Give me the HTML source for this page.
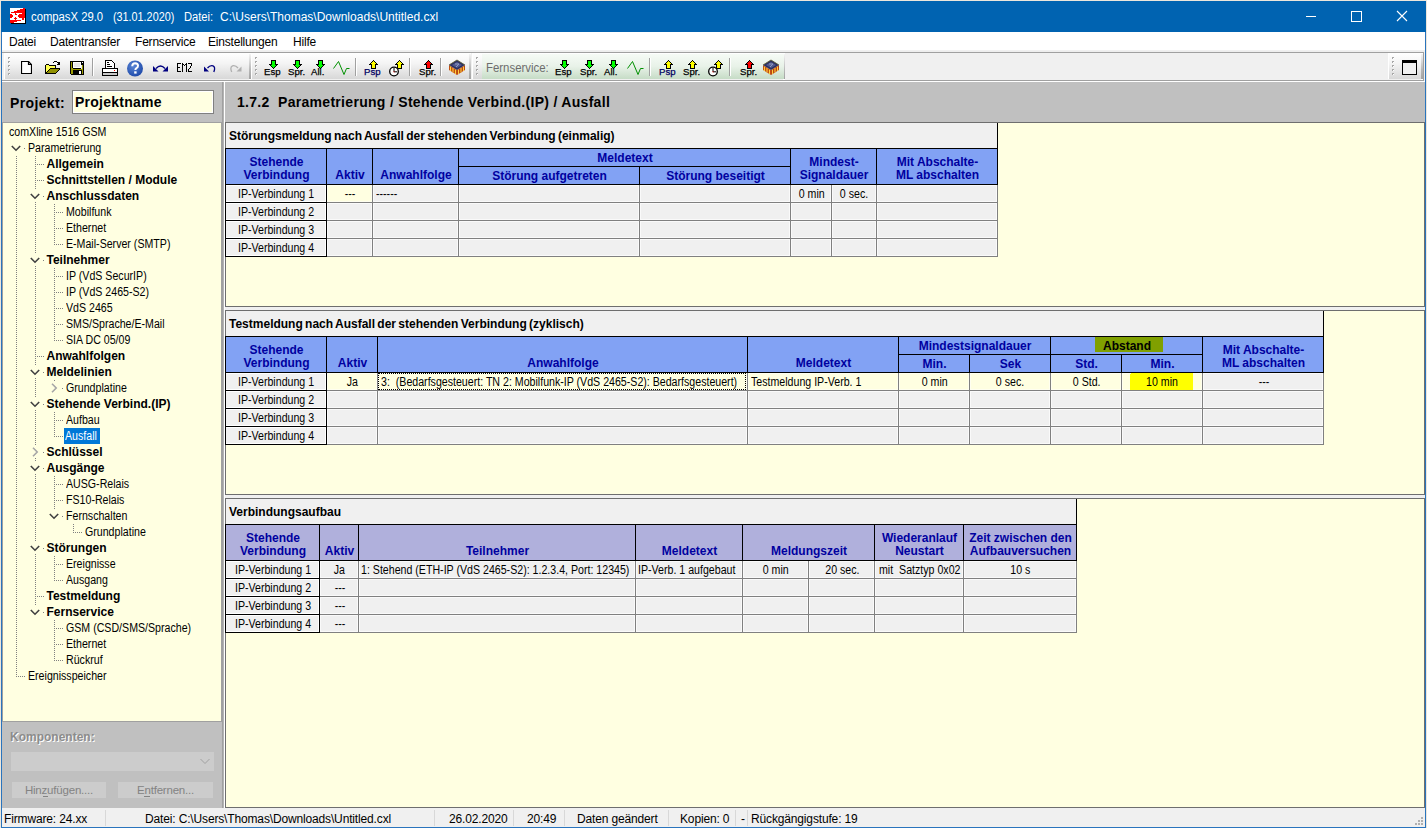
<!DOCTYPE html><html><head><meta charset="utf-8"><style>html,body{margin:0;padding:0;width:1427px;height:828px;overflow:hidden;background:#e9e9e9;}body{position:relative;font-family:"Liberation Sans",sans-serif;}body>div,body>svg{position:absolute;box-sizing:border-box;}.t{white-space:nowrap;}</style></head><body><div style="left:0px;top:0px;width:1427px;height:828px;background:#ece6dc;"></div>
<div style="left:1px;top:1px;width:1425px;height:827px;background:#2a74bd;"></div>
<div style="left:1px;top:1px;width:1425px;height:31px;background:#0063b1;"></div>
<div style="left:2px;top:32px;width:1423px;height:795px;background:#f0f0f0;"></div>
<svg style="left:10px;top:8px" width="16" height="16" viewBox="0 0 16 16" shape-rendering="crispEdges"><rect x="0" y="0" width="15" height="15" fill="#fff"/><path d="M13 0h2v1h-2zM10 1h5v1h-5zM7 2h8v1h-8zM4 3h11v1h-11zM1 4h14v1h-14zM5 5h1v1h-1zM12 5h3v1h-3zM0 6h2v1h-2zM5 6h2v1h-2zM9 6h6v1h-6zM0 7h3v1h-3zM8 7h7v1h-7zM0 8h3v1h-3zM8 8h7v1h-7zM0 9h2v1h-2zM5 9h1v1h-1zM9 9h6v1h-6zM4 10h3v1h-3zM12 10h2v1h-2zM5 11h1v1h-1zM12 11h2v1h-2zM0 12h11v1h-11zM0 13h7v1h-7zM0 14h4v1h-4z" fill="#f00"/><rect x="15" y="1" width="1" height="15" fill="#000"/><rect x="1" y="15" width="15" height="1" fill="#000"/></svg>
<div class="t" style="left:31px;top:11px;font-size:12px;line-height:12px;color:#fff;white-space:pre;"><span style="display:inline-block;transform:scaleX(0.94);transform-origin:0 0">compasX 29.0</span></div>
<div class="t" style="left:113px;top:11px;font-size:12px;line-height:12px;color:#fff;white-space:pre;"><span style="display:inline-block;transform:scaleX(0.9);transform-origin:0 0">(31.01.2020)</span></div>
<div class="t" style="left:184px;top:11px;font-size:12px;line-height:12px;color:#fff;white-space:pre;"><span style="display:inline-block;transform:scaleX(0.93);transform-origin:0 0">Datei:</span></div>
<div class="t" style="left:220px;top:11px;font-size:12px;line-height:12px;color:#fff;white-space:pre;">C:\Users\Thomas\Downloads\Untitled.cxl</div>
<div style="left:1306px;top:16px;width:10px;height:1px;background:#fff;"></div>
<svg style="left:1351px;top:11px" width="11" height="11" viewBox="0 0 11 11" shape-rendering="crispEdges"><rect x="0.5" y="0.5" width="10" height="10" fill="none" stroke="#fff" stroke-width="1"/></svg>
<svg style="left:1396px;top:10px" width="12" height="12" viewBox="0 0 12 12"><path d="M1 1L11 11M11 1L1 11" stroke="#fff" stroke-width="1.1"/></svg>
<div style="left:2px;top:32px;width:1423px;height:18px;background:#ffffff;"></div>
<div class="t" style="left:9px;top:36px;font-size:12px;line-height:12px;color:#000;letter-spacing:-0.2px;">Datei</div>
<div class="t" style="left:50px;top:36px;font-size:12px;line-height:12px;color:#000;letter-spacing:-0.2px;">Datentransfer</div>
<div class="t" style="left:135px;top:36px;font-size:12px;line-height:12px;color:#000;letter-spacing:-0.2px;">Fernservice</div>
<div class="t" style="left:208px;top:36px;font-size:12px;line-height:12px;color:#000;letter-spacing:-0.2px;">Einstellungen</div>
<div class="t" style="left:293px;top:36px;font-size:12px;line-height:12px;color:#000;letter-spacing:-0.2px;">Hilfe</div>
<div style="left:2px;top:50px;width:1422px;height:1px;background:#f0f0f0;"></div>
<div style="left:2px;top:51px;width:1422px;height:1px;background:#eeeeee;"></div>
<div style="left:2px;top:52px;width:1422px;height:1px;background:#a0a0a0;"></div>
<div style="left:2px;top:53px;width:1422px;height:27px;background:#f0f0f0;"></div>
<div style="left:2px;top:80px;width:1422px;height:1px;background:#a0a0a0;"></div>
<div style="left:2px;top:81px;width:1423px;height:1px;background:#ffffff;"></div>
<div style="left:1423px;top:52px;width:1px;height:29px;background:#a0a0a0;"></div>
<div style="left:4px;top:53px;width:247px;height:26px;background:linear-gradient(#ffffff,#f4f4f4 40%,#d8d8d8);"></div>
<div style="left:4px;top:54px;width:1px;height:25px;background:#ffffff;"></div>
<div style="left:249px;top:54px;width:2px;height:26px;background:linear-gradient(#f4f4f4,#b8b8b8 60%,#a0a0a0);"></div>
<div style="left:249px;top:79px;width:2px;height:1px;background:#ffffff;"></div>
<div style="left:8px;top:57px;width:2px;height:2px;background:#a8a8a8;"></div>
<div style="left:9px;top:58px;width:1px;height:1px;background:#ffffff;"></div>
<div style="left:8px;top:61px;width:2px;height:2px;background:#a8a8a8;"></div>
<div style="left:9px;top:62px;width:1px;height:1px;background:#ffffff;"></div>
<div style="left:8px;top:65px;width:2px;height:2px;background:#a8a8a8;"></div>
<div style="left:9px;top:66px;width:1px;height:1px;background:#ffffff;"></div>
<div style="left:8px;top:69px;width:2px;height:2px;background:#a8a8a8;"></div>
<div style="left:9px;top:70px;width:1px;height:1px;background:#ffffff;"></div>
<div style="left:8px;top:73px;width:2px;height:2px;background:#a8a8a8;"></div>
<div style="left:9px;top:74px;width:1px;height:1px;background:#ffffff;"></div>
<div style="left:251px;top:53px;width:220px;height:26px;background:linear-gradient(#ffffff,#f4f4f4 40%,#d8d8d8);"></div>
<div style="left:251px;top:54px;width:1px;height:25px;background:#ffffff;"></div>
<div style="left:469px;top:54px;width:2px;height:26px;background:linear-gradient(#f4f4f4,#b8b8b8 60%,#a0a0a0);"></div>
<div style="left:469px;top:79px;width:2px;height:1px;background:#ffffff;"></div>
<div style="left:255px;top:57px;width:2px;height:2px;background:#a8a8a8;"></div>
<div style="left:256px;top:58px;width:1px;height:1px;background:#ffffff;"></div>
<div style="left:255px;top:61px;width:2px;height:2px;background:#a8a8a8;"></div>
<div style="left:256px;top:62px;width:1px;height:1px;background:#ffffff;"></div>
<div style="left:255px;top:65px;width:2px;height:2px;background:#a8a8a8;"></div>
<div style="left:256px;top:66px;width:1px;height:1px;background:#ffffff;"></div>
<div style="left:255px;top:69px;width:2px;height:2px;background:#a8a8a8;"></div>
<div style="left:256px;top:70px;width:1px;height:1px;background:#ffffff;"></div>
<div style="left:255px;top:73px;width:2px;height:2px;background:#a8a8a8;"></div>
<div style="left:256px;top:74px;width:1px;height:1px;background:#ffffff;"></div>
<div style="left:472px;top:53px;width:313px;height:26px;background:linear-gradient(#ffffff,#f4f4f4 40%,#d8d8d8);"></div>
<div style="left:472px;top:54px;width:1px;height:25px;background:#ffffff;"></div>
<div style="left:783px;top:54px;width:2px;height:26px;background:linear-gradient(#f4f4f4,#b8b8b8 60%,#a0a0a0);"></div>
<div style="left:783px;top:79px;width:2px;height:1px;background:#ffffff;"></div>
<div style="left:482px;top:54px;width:302px;height:25px;background:linear-gradient(#f6fbf6,#e8f2e8 50%,#c6dcc6);"></div>
<div style="left:476px;top:57px;width:2px;height:2px;background:#a8a8a8;"></div>
<div style="left:477px;top:58px;width:1px;height:1px;background:#ffffff;"></div>
<div style="left:476px;top:61px;width:2px;height:2px;background:#a8a8a8;"></div>
<div style="left:477px;top:62px;width:1px;height:1px;background:#ffffff;"></div>
<div style="left:476px;top:65px;width:2px;height:2px;background:#a8a8a8;"></div>
<div style="left:477px;top:66px;width:1px;height:1px;background:#ffffff;"></div>
<div style="left:476px;top:69px;width:2px;height:2px;background:#a8a8a8;"></div>
<div style="left:477px;top:70px;width:1px;height:1px;background:#ffffff;"></div>
<div style="left:476px;top:73px;width:2px;height:2px;background:#a8a8a8;"></div>
<div style="left:477px;top:74px;width:1px;height:1px;background:#ffffff;"></div>
<div style="left:1388px;top:53px;width:35px;height:26px;background:linear-gradient(#ffffff,#f4f4f4 40%,#d8d8d8);"></div>
<div style="left:1388px;top:54px;width:1px;height:25px;background:#ffffff;"></div>
<div style="left:1421px;top:54px;width:2px;height:26px;background:linear-gradient(#f4f4f4,#b8b8b8 60%,#a0a0a0);"></div>
<div style="left:1421px;top:79px;width:2px;height:1px;background:#ffffff;"></div>
<div style="left:1392px;top:57px;width:2px;height:2px;background:#a8a8a8;"></div>
<div style="left:1393px;top:58px;width:1px;height:1px;background:#ffffff;"></div>
<div style="left:1392px;top:61px;width:2px;height:2px;background:#a8a8a8;"></div>
<div style="left:1393px;top:62px;width:1px;height:1px;background:#ffffff;"></div>
<div style="left:1392px;top:65px;width:2px;height:2px;background:#a8a8a8;"></div>
<div style="left:1393px;top:66px;width:1px;height:1px;background:#ffffff;"></div>
<div style="left:1392px;top:69px;width:2px;height:2px;background:#a8a8a8;"></div>
<div style="left:1393px;top:70px;width:1px;height:1px;background:#ffffff;"></div>
<div style="left:1392px;top:73px;width:2px;height:2px;background:#a8a8a8;"></div>
<div style="left:1393px;top:74px;width:1px;height:1px;background:#ffffff;"></div>
<svg style="left:21px;top:61px" width="11" height="13" viewBox="0 0 11 13"><path d="M0.5 0.5H7.5L10.5 3.5V12.5H0.5Z" fill="#fff" stroke="#000" stroke-width="1.2"/><path d="M7.5 0.5V3.5H10.5" fill="none" stroke="#000" stroke-width="1.2"/></svg>
<svg style="left:45px;top:61px" width="15" height="13" viewBox="0 0 15 13" shape-rendering="crispEdges"><path d="M1 4h3v1h-3zM1 5h9v2h-9zM1 7h4v1h-4zM1 8h3v1h-3zM1 9h2v1h-2zM1 10h1v1h-1z" fill="#ffff50"/><path d="M5 8h9v1h-9zM4 9h9v1h-9zM3 10h9v1h-9zM2 11h9v1h-9z" fill="#909000"/><path d="M9 0h3v1h-3zM8 1h1v1h-1zM12 1h1v1h-1zM13 1h2v1h-2zM13 2h2v1h-2zM12 3h3v1h-3zM1 3h3v1h-3zM0 4h1v9h-1zM4 4h7v1h-7zM10 5h1v2h-1zM5 7h10v1h-10zM4 8h1v1h-1zM14 8h1v1h-1zM3 9h1v1h-1zM13 9h1v1h-1zM2 10h1v1h-1zM12 10h1v1h-1zM1 11h1v1h-1zM11 11h1v1h-1zM0 12h11v1h-11z" fill="#000"/></svg>
<svg style="left:70px;top:61px" width="14" height="14" viewBox="0 0 14 14" shape-rendering="crispEdges"><path d="M0 0h14v1h-14zM0 0h1v13h-1zM13 0h1v14h-1zM1 13h13v1h-13zM2 1h1v6h-1zM11 1h1v3h-1zM12 2h1v2h-1zM3 7h8v1h-8zM3 9h9v4h-9zM11 1h1v1h-1z" fill="#000"/><path d="M1 1h1v12h-1zM2 7h1v6h-1zM1 8h12v1h-12zM12 4h1v9h-1z" fill="#9a9a00"/><path d="M3 1h8v6h-8zM9 10h2v3h-2zM12 1h1v1h-1z" fill="#fff"/><path d="M4 2h6v4h-6z" fill="#e8e8e8"/></svg>
<div style="left:92px;top:58px;width:1px;height:18px;background:#a0a0a0;"></div>
<div style="left:93px;top:58px;width:1px;height:18px;background:#ffffff;"></div>
<svg style="left:102px;top:60px" width="17" height="17" viewBox="0 0 17 17" shape-rendering="crispEdges"><path d="M3.5 0.5H9.5L12.5 3.5V8.5H3.5Z" fill="#fff" stroke="#000"/><rect x="5" y="2" width="2" height="1" fill="#000"/><rect x="5" y="4" width="3" height="1" fill="#000"/><rect x="5" y="6" width="5" height="1" fill="#000"/><rect x="0.5" y="8.5" width="15" height="7" rx="1" fill="#fff" stroke="#000"/><rect x="1" y="12" width="15" height="1" fill="#000"/><rect x="1" y="13" width="14" height="2" fill="#c8c8c8"/><rect x="12" y="10" width="1" height="1" fill="#f00"/></svg>
<svg style="left:126px;top:60px" width="18" height="17" viewBox="0 0 18 17"><defs><radialGradient id="hg" cx="0.4" cy="0.35" r="0.7"><stop offset="0" stop-color="#5a86d6"/><stop offset="1" stop-color="#1d48a8"/></radialGradient></defs><circle cx="9" cy="8.5" r="8" fill="url(#hg)"/><path d="M6.2 6.2Q6.4 3.3 9.2 3.3Q12 3.4 12 5.8Q12 7.4 10.2 8.3Q9.4 8.8 9.4 10" fill="none" stroke="#fff" stroke-width="2"/><rect x="8.2" y="11.3" width="2.4" height="2.3" fill="#fff"/></svg>
<svg style="left:152px;top:64px" width="17" height="9" viewBox="0 0 17 9"><path d="M4 4.5Q8.5 -0.5 13 4.5" fill="none" stroke="#000080" stroke-width="1.3"/><path d="M1 2V7.5H6.5Z" fill="#000080"/><path d="M16 2V7.5H10.5Z" fill="#000080"/></svg>
<svg style="left:177px;top:63px" width="15" height="9" viewBox="0 0 15 9" shape-rendering="crispEdges"><path d="M0 0h4v1h-4zM0 0h1v9h-1zM0 4h3v1h-3zM0 8h4v1h-4zM5 0h1v9h-1zM9 0h1v9h-1zM6 1h1v1h-1zM7 2h1v1h-1zM8 1h1v1h-1zM11 0h4v1h-4zM14 0h1v3h-1zM13 3h1v2h-1zM12 5h1v1h-1zM11 6h1v3h-1zM11 8h4v1h-4z" fill="#000"/></svg>
<svg style="left:203px;top:64px" width="14" height="10" viewBox="0 0 14 10"><path d="M4.5 4Q7 1 10 1.8Q12.8 3 10.8 8" fill="none" stroke="#000080" stroke-width="1.3"/><path d="M1 2.5V7.5H6Z" fill="#000080"/></svg>
<svg style="left:229px;top:64px" width="14" height="10" viewBox="0 0 14 10"><path d="M9 4Q6.5 1 3.5 1.8Q0.7 3 2.7 8" fill="none" stroke="#b0b0b0" stroke-width="1.3"/><path d="M12.5 2.5V7.5H7.5Z" fill="#b0b0b0"/></svg>
<svg style="left:269px;top:60px" width="9" height="9" viewBox="0 0 9 9" shape-rendering="crispEdges"><path d="M3 1h3v1h-3zM3 2h3v1h-3zM3 3h3v1h-3zM3 4h3v1h-3zM2 5h5v1h-5zM3 6h3v1h-3zM4 7h1v1h-1z" fill="#00ff00"/><path d="M2 0h5v1h-5zM2 1h1v1h-1zM6 1h1v1h-1zM2 2h1v1h-1zM6 2h1v1h-1zM2 3h1v1h-1zM6 3h1v1h-1zM0 4h3v1h-3zM6 4h3v1h-3zM1 5h1v1h-1zM7 5h1v1h-1zM2 6h1v1h-1zM6 6h1v1h-1zM3 7h1v1h-1zM5 7h1v1h-1zM4 8h1v1h-1z" fill="#000"/></svg>
<div class="t" style="left:264px;top:67px;font-size:9.6px;line-height:9.6px;color:#000;-webkit-text-stroke:0.25px #000;">Esp</div>
<svg style="left:293px;top:60px" width="9" height="9" viewBox="0 0 9 9" shape-rendering="crispEdges"><path d="M3 1h3v1h-3zM3 2h3v1h-3zM3 3h3v1h-3zM3 4h3v1h-3zM2 5h5v1h-5zM3 6h3v1h-3zM4 7h1v1h-1z" fill="#00ff00"/><path d="M2 0h5v1h-5zM2 1h1v1h-1zM6 1h1v1h-1zM2 2h1v1h-1zM6 2h1v1h-1zM2 3h1v1h-1zM6 3h1v1h-1zM0 4h3v1h-3zM6 4h3v1h-3zM1 5h1v1h-1zM7 5h1v1h-1zM2 6h1v1h-1zM6 6h1v1h-1zM3 7h1v1h-1zM5 7h1v1h-1zM4 8h1v1h-1z" fill="#000"/></svg>
<div class="t" style="left:288px;top:67px;font-size:9.6px;line-height:9.6px;color:#000;-webkit-text-stroke:0.25px #000;">Spr.</div>
<svg style="left:316px;top:60px" width="9" height="9" viewBox="0 0 9 9" shape-rendering="crispEdges"><path d="M3 1h3v1h-3zM3 2h3v1h-3zM3 3h3v1h-3zM3 4h3v1h-3zM2 5h5v1h-5zM3 6h3v1h-3zM4 7h1v1h-1z" fill="#00ff00"/><path d="M2 0h5v1h-5zM2 1h1v1h-1zM6 1h1v1h-1zM2 2h1v1h-1zM6 2h1v1h-1zM2 3h1v1h-1zM6 3h1v1h-1zM0 4h3v1h-3zM6 4h3v1h-3zM1 5h1v1h-1zM7 5h1v1h-1zM2 6h1v1h-1zM6 6h1v1h-1zM3 7h1v1h-1zM5 7h1v1h-1zM4 8h1v1h-1z" fill="#000"/></svg>
<div class="t" style="left:311px;top:67px;font-size:9.6px;line-height:9.6px;color:#000;-webkit-text-stroke:0.25px #000;">All.</div>
<svg style="left:333px;top:60px" width="17" height="16" viewBox="0 0 17 16"><path d="M0.5 8.5L5.5 1.5L11 14.5L13.5 8.5H16.5" fill="none" stroke="#009000" stroke-width="1"/></svg>
<div style="left:355px;top:58px;width:1px;height:18px;background:#a0a0a0;"></div>
<div style="left:356px;top:58px;width:1px;height:18px;background:#ffffff;"></div>
<svg style="left:369px;top:60px" width="9" height="9" viewBox="0 0 9 9" shape-rendering="crispEdges"><path d="M4 1h1v1h-1zM3 2h3v1h-3zM2 3h5v1h-5zM3 4h3v1h-3zM3 5h3v1h-3zM3 6h3v1h-3zM3 7h3v1h-3z" fill="#ff0"/><path d="M4 0h1v1h-1zM3 1h1v1h-1zM5 1h1v1h-1zM2 2h1v1h-1zM6 2h1v1h-1zM1 3h1v1h-1zM7 3h1v1h-1zM0 4h3v1h-3zM6 4h3v1h-3zM2 5h1v1h-1zM6 5h1v1h-1zM2 6h1v1h-1zM6 6h1v1h-1zM2 7h1v1h-1zM6 7h1v1h-1zM2 8h5v1h-5z" fill="#000"/></svg>
<div class="t" style="left:364px;top:67px;font-size:9.6px;line-height:9.6px;color:#000060;-webkit-text-stroke:0.25px #000060;">Psp</div>
<svg style="left:395px;top:60px" width="9" height="9" viewBox="0 0 9 9" shape-rendering="crispEdges"><path d="M4 1h1v1h-1zM3 2h3v1h-3zM2 3h5v1h-5zM3 4h3v1h-3zM3 5h3v1h-3zM3 6h3v1h-3zM3 7h3v1h-3z" fill="#ff0"/><path d="M4 0h1v1h-1zM3 1h1v1h-1zM5 1h1v1h-1zM2 2h1v1h-1zM6 2h1v1h-1zM1 3h1v1h-1zM7 3h1v1h-1zM0 4h3v1h-3zM6 4h3v1h-3zM2 5h1v1h-1zM6 5h1v1h-1zM2 6h1v1h-1zM6 6h1v1h-1zM2 7h1v1h-1zM6 7h1v1h-1zM2 8h5v1h-5z" fill="#000"/></svg>
<svg style="left:389px;top:66px" width="11" height="11" viewBox="0 0 11 11"><circle cx="5" cy="5.5" r="4.3" fill="#fff" stroke="#000" stroke-width="1.3"/><path d="M5 2V5.8H8" fill="none" stroke="#000" stroke-width="1"/><rect x="4.5" y="5.3" width="1" height="1" fill="#f00"/></svg>
<div style="left:409px;top:58px;width:1px;height:18px;background:#a0a0a0;"></div>
<div style="left:410px;top:58px;width:1px;height:18px;background:#ffffff;"></div>
<svg style="left:424px;top:60px" width="9" height="9" viewBox="0 0 9 9" shape-rendering="crispEdges"><path d="M4 1h1v1h-1zM3 2h3v1h-3zM2 3h5v1h-5zM3 4h3v1h-3zM3 5h3v1h-3zM3 6h3v1h-3zM3 7h3v1h-3z" fill="#f00"/><path d="M4 0h1v1h-1zM3 1h1v1h-1zM5 1h1v1h-1zM2 2h1v1h-1zM6 2h1v1h-1zM1 3h1v1h-1zM7 3h1v1h-1zM0 4h3v1h-3zM6 4h3v1h-3zM2 5h1v1h-1zM6 5h1v1h-1zM2 6h1v1h-1zM6 6h1v1h-1zM2 7h1v1h-1zM6 7h1v1h-1zM2 8h5v1h-5z" fill="#000"/></svg>
<div class="t" style="left:419px;top:67px;font-size:9.6px;line-height:9.6px;color:#000;-webkit-text-stroke:0.25px #000;">Spr.</div>
<div style="left:440px;top:58px;width:1px;height:18px;background:#a0a0a0;"></div>
<div style="left:441px;top:58px;width:1px;height:18px;background:#ffffff;"></div>
<svg style="left:448px;top:59px" width="18" height="17" viewBox="0 0 18 17"><path d="M1 6L9 11V16L1 11Z" fill="#c04a10"/><path d="M9 11L17 6V11L9 16Z" fill="#b84010"/><path d="M2.5 7.5V12M5 9V13.5M7.5 10.5V15M10.5 10.5V15M13 9V13.5M15.5 7.5V12" stroke="#ffd040" stroke-width="1.1"/><path d="M1 6L9 1L17 6L9 11Z" fill="#2c3060"/><path d="M4 6L9 3L14 6L9 9Z" fill="#505a90"/><path d="M7 5H11L8 8" fill="none" stroke="#9098c0" stroke-width="1"/><path d="M1 6L9 1L17 6" fill="none" stroke="#5a5a30" stroke-width="0.8"/></svg>
<div class="t" style="left:486px;top:62px;font-size:12px;line-height:12px;color:#6d6d6d;"><span style="display:inline-block;transform:scaleX(0.95);transform-origin:0 0">Fernservice:</span></div>
<svg style="left:560px;top:60px" width="9" height="9" viewBox="0 0 9 9" shape-rendering="crispEdges"><path d="M3 1h3v1h-3zM3 2h3v1h-3zM3 3h3v1h-3zM3 4h3v1h-3zM2 5h5v1h-5zM3 6h3v1h-3zM4 7h1v1h-1z" fill="#00ff00"/><path d="M2 0h5v1h-5zM2 1h1v1h-1zM6 1h1v1h-1zM2 2h1v1h-1zM6 2h1v1h-1zM2 3h1v1h-1zM6 3h1v1h-1zM0 4h3v1h-3zM6 4h3v1h-3zM1 5h1v1h-1zM7 5h1v1h-1zM2 6h1v1h-1zM6 6h1v1h-1zM3 7h1v1h-1zM5 7h1v1h-1zM4 8h1v1h-1z" fill="#000"/></svg>
<div class="t" style="left:555px;top:67px;font-size:9.6px;line-height:9.6px;color:#000;-webkit-text-stroke:0.25px #000;">Esp</div>
<svg style="left:585px;top:60px" width="9" height="9" viewBox="0 0 9 9" shape-rendering="crispEdges"><path d="M3 1h3v1h-3zM3 2h3v1h-3zM3 3h3v1h-3zM3 4h3v1h-3zM2 5h5v1h-5zM3 6h3v1h-3zM4 7h1v1h-1z" fill="#00ff00"/><path d="M2 0h5v1h-5zM2 1h1v1h-1zM6 1h1v1h-1zM2 2h1v1h-1zM6 2h1v1h-1zM2 3h1v1h-1zM6 3h1v1h-1zM0 4h3v1h-3zM6 4h3v1h-3zM1 5h1v1h-1zM7 5h1v1h-1zM2 6h1v1h-1zM6 6h1v1h-1zM3 7h1v1h-1zM5 7h1v1h-1zM4 8h1v1h-1z" fill="#000"/></svg>
<div class="t" style="left:580px;top:67px;font-size:9.6px;line-height:9.6px;color:#000;-webkit-text-stroke:0.25px #000;">Spr.</div>
<svg style="left:609px;top:60px" width="9" height="9" viewBox="0 0 9 9" shape-rendering="crispEdges"><path d="M3 1h3v1h-3zM3 2h3v1h-3zM3 3h3v1h-3zM3 4h3v1h-3zM2 5h5v1h-5zM3 6h3v1h-3zM4 7h1v1h-1z" fill="#00ff00"/><path d="M2 0h5v1h-5zM2 1h1v1h-1zM6 1h1v1h-1zM2 2h1v1h-1zM6 2h1v1h-1zM2 3h1v1h-1zM6 3h1v1h-1zM0 4h3v1h-3zM6 4h3v1h-3zM1 5h1v1h-1zM7 5h1v1h-1zM2 6h1v1h-1zM6 6h1v1h-1zM3 7h1v1h-1zM5 7h1v1h-1zM4 8h1v1h-1z" fill="#000"/></svg>
<div class="t" style="left:604px;top:67px;font-size:9.6px;line-height:9.6px;color:#000;-webkit-text-stroke:0.25px #000;">All.</div>
<svg style="left:627px;top:60px" width="17" height="16" viewBox="0 0 17 16"><path d="M0.5 8.5L5.5 1.5L11 14.5L13.5 8.5H16.5" fill="none" stroke="#009000" stroke-width="1"/></svg>
<div style="left:649px;top:58px;width:1px;height:18px;background:#a0a0a0;"></div>
<div style="left:650px;top:58px;width:1px;height:18px;background:#ffffff;"></div>
<svg style="left:664px;top:60px" width="9" height="9" viewBox="0 0 9 9" shape-rendering="crispEdges"><path d="M4 1h1v1h-1zM3 2h3v1h-3zM2 3h5v1h-5zM3 4h3v1h-3zM3 5h3v1h-3zM3 6h3v1h-3zM3 7h3v1h-3z" fill="#ff0"/><path d="M4 0h1v1h-1zM3 1h1v1h-1zM5 1h1v1h-1zM2 2h1v1h-1zM6 2h1v1h-1zM1 3h1v1h-1zM7 3h1v1h-1zM0 4h3v1h-3zM6 4h3v1h-3zM2 5h1v1h-1zM6 5h1v1h-1zM2 6h1v1h-1zM6 6h1v1h-1zM2 7h1v1h-1zM6 7h1v1h-1zM2 8h5v1h-5z" fill="#000"/></svg>
<div class="t" style="left:659px;top:67px;font-size:9.6px;line-height:9.6px;color:#000060;-webkit-text-stroke:0.25px #000060;">Psp</div>
<svg style="left:688px;top:60px" width="9" height="9" viewBox="0 0 9 9" shape-rendering="crispEdges"><path d="M4 1h1v1h-1zM3 2h3v1h-3zM2 3h5v1h-5zM3 4h3v1h-3zM3 5h3v1h-3zM3 6h3v1h-3zM3 7h3v1h-3z" fill="#ff0"/><path d="M4 0h1v1h-1zM3 1h1v1h-1zM5 1h1v1h-1zM2 2h1v1h-1zM6 2h1v1h-1zM1 3h1v1h-1zM7 3h1v1h-1zM0 4h3v1h-3zM6 4h3v1h-3zM2 5h1v1h-1zM6 5h1v1h-1zM2 6h1v1h-1zM6 6h1v1h-1zM2 7h1v1h-1zM6 7h1v1h-1zM2 8h5v1h-5z" fill="#000"/></svg>
<div class="t" style="left:683px;top:67px;font-size:9.6px;line-height:9.6px;color:#000;-webkit-text-stroke:0.25px #000;">Spr.</div>
<svg style="left:714px;top:60px" width="9" height="9" viewBox="0 0 9 9" shape-rendering="crispEdges"><path d="M4 1h1v1h-1zM3 2h3v1h-3zM2 3h5v1h-5zM3 4h3v1h-3zM3 5h3v1h-3zM3 6h3v1h-3zM3 7h3v1h-3z" fill="#ff0"/><path d="M4 0h1v1h-1zM3 1h1v1h-1zM5 1h1v1h-1zM2 2h1v1h-1zM6 2h1v1h-1zM1 3h1v1h-1zM7 3h1v1h-1zM0 4h3v1h-3zM6 4h3v1h-3zM2 5h1v1h-1zM6 5h1v1h-1zM2 6h1v1h-1zM6 6h1v1h-1zM2 7h1v1h-1zM6 7h1v1h-1zM2 8h5v1h-5z" fill="#000"/></svg>
<svg style="left:708px;top:66px" width="11" height="11" viewBox="0 0 11 11"><circle cx="5" cy="5.5" r="4.3" fill="#fff" stroke="#000" stroke-width="1.3"/><path d="M5 2V5.8H8" fill="none" stroke="#000" stroke-width="1"/><rect x="4.5" y="5.3" width="1" height="1" fill="#f00"/></svg>
<div style="left:729px;top:58px;width:1px;height:18px;background:#a0a0a0;"></div>
<div style="left:730px;top:58px;width:1px;height:18px;background:#ffffff;"></div>
<svg style="left:745px;top:60px" width="9" height="9" viewBox="0 0 9 9" shape-rendering="crispEdges"><path d="M4 1h1v1h-1zM3 2h3v1h-3zM2 3h5v1h-5zM3 4h3v1h-3zM3 5h3v1h-3zM3 6h3v1h-3zM3 7h3v1h-3z" fill="#f00"/><path d="M4 0h1v1h-1zM3 1h1v1h-1zM5 1h1v1h-1zM2 2h1v1h-1zM6 2h1v1h-1zM1 3h1v1h-1zM7 3h1v1h-1zM0 4h3v1h-3zM6 4h3v1h-3zM2 5h1v1h-1zM6 5h1v1h-1zM2 6h1v1h-1zM6 6h1v1h-1zM2 7h1v1h-1zM6 7h1v1h-1zM2 8h5v1h-5z" fill="#000"/></svg>
<div class="t" style="left:740px;top:67px;font-size:9.6px;line-height:9.6px;color:#000;-webkit-text-stroke:0.25px #000;">Spr.</div>
<svg style="left:762px;top:59px" width="18" height="17" viewBox="0 0 18 17"><path d="M1 6L9 11V16L1 11Z" fill="#c04a10"/><path d="M9 11L17 6V11L9 16Z" fill="#b84010"/><path d="M2.5 7.5V12M5 9V13.5M7.5 10.5V15M10.5 10.5V15M13 9V13.5M15.5 7.5V12" stroke="#ffd040" stroke-width="1.1"/><path d="M1 6L9 1L17 6L9 11Z" fill="#2c3060"/><path d="M4 6L9 3L14 6L9 9Z" fill="#505a90"/><path d="M7 5H11L8 8" fill="none" stroke="#9098c0" stroke-width="1"/><path d="M1 6L9 1L17 6" fill="none" stroke="#5a5a30" stroke-width="0.8"/></svg>
<svg style="left:1402px;top:60px" width="15" height="15" viewBox="0 0 15 15" shape-rendering="crispEdges"><rect x="0" y="0" width="15" height="15" fill="#000"/><rect x="1" y="3" width="13" height="11" fill="#f0f0f0"/></svg>
<div style="left:2px;top:82px;width:1423px;height:726px;background:#c0c0c0;"></div>
<div class="t" style="left:10px;top:96px;font-size:14px;line-height:14px;color:#000;font-weight:bold;letter-spacing:0.35px;">Projekt:</div>
<div style="left:72px;top:90px;width:142px;height:24px;background:#808080;"></div>
<div style="left:73px;top:91px;width:140px;height:22px;background:#ffffff;"></div>
<div style="left:74px;top:92px;width:138px;height:20px;background:#ffffe1;"></div>
<div class="t" style="left:75px;top:95px;font-size:14px;line-height:14px;color:#000;font-weight:bold;letter-spacing:0.25px;">Projektname</div>
<div style="left:2px;top:122px;width:220px;height:600px;background:#a0a0a0;"></div>
<div style="left:3px;top:123px;width:218px;height:598px;background:#ffffe1;"></div>
<div class="t" style="left:9px;top:126px;font-size:12px;line-height:12px;color:#000;"><span style="display:inline-block;transform:scaleX(0.885);transform-origin:0 0">comXline 1516 GSM</span></div>
<div style="left:24px;top:148px;width:1px;height:1px;background:#808080;"></div>
<div style="left:11px;top:142px;width:11px;height:12px;background:#ffffe1;z-index:2"></div>
<svg style="left:11px;top:145px;z-index:3" width="10" height="7" viewBox="0 0 10 7"><path d="M0.8 1L5 5.2L9.2 1" fill="none" stroke="#404040" stroke-width="1.6"/></svg>
<div class="t" style="left:27.5px;top:142px;font-size:12px;line-height:12px;color:#000;"><span style="display:inline-block;transform:scaleX(0.885);transform-origin:0 0">Parametrierung</span></div>
<div style="left:37px;top:164px;width:8px;height:1px;background:repeating-linear-gradient(90deg,#808080 0 1px, transparent 1px 2px);"></div>
<div class="t" style="left:46.5px;top:158px;font-size:12px;line-height:12px;color:#000;font-weight:bold;">Allgemein</div>
<div style="left:37px;top:180px;width:8px;height:1px;background:repeating-linear-gradient(90deg,#808080 0 1px, transparent 1px 2px);"></div>
<div class="t" style="left:46.5px;top:174px;font-size:12px;line-height:12px;color:#000;font-weight:bold;">Schnittstellen / Module</div>
<div style="left:43px;top:196px;width:1px;height:1px;background:#808080;"></div>
<div style="left:30px;top:190px;width:11px;height:12px;background:#ffffe1;z-index:2"></div>
<svg style="left:30px;top:193px;z-index:3" width="10" height="7" viewBox="0 0 10 7"><path d="M0.8 1L5 5.2L9.2 1" fill="none" stroke="#404040" stroke-width="1.6"/></svg>
<div class="t" style="left:46.5px;top:190px;font-size:12px;line-height:12px;color:#000;font-weight:bold;">Anschlussdaten</div>
<div style="left:56px;top:212px;width:8px;height:1px;background:repeating-linear-gradient(90deg,#808080 0 1px, transparent 1px 2px);"></div>
<div class="t" style="left:65.5px;top:206px;font-size:12px;line-height:12px;color:#000;"><span style="display:inline-block;transform:scaleX(0.885);transform-origin:0 0">Mobilfunk</span></div>
<div style="left:56px;top:228px;width:8px;height:1px;background:repeating-linear-gradient(90deg,#808080 0 1px, transparent 1px 2px);"></div>
<div class="t" style="left:65.5px;top:222px;font-size:12px;line-height:12px;color:#000;"><span style="display:inline-block;transform:scaleX(0.885);transform-origin:0 0">Ethernet</span></div>
<div style="left:56px;top:244px;width:8px;height:1px;background:repeating-linear-gradient(90deg,#808080 0 1px, transparent 1px 2px);"></div>
<div class="t" style="left:65.5px;top:238px;font-size:12px;line-height:12px;color:#000;"><span style="display:inline-block;transform:scaleX(0.885);transform-origin:0 0">E-Mail-Server (SMTP)</span></div>
<div style="left:43px;top:260px;width:1px;height:1px;background:#808080;"></div>
<div style="left:30px;top:254px;width:11px;height:12px;background:#ffffe1;z-index:2"></div>
<svg style="left:30px;top:257px;z-index:3" width="10" height="7" viewBox="0 0 10 7"><path d="M0.8 1L5 5.2L9.2 1" fill="none" stroke="#404040" stroke-width="1.6"/></svg>
<div class="t" style="left:46.5px;top:254px;font-size:12px;line-height:12px;color:#000;font-weight:bold;">Teilnehmer</div>
<div style="left:56px;top:276px;width:8px;height:1px;background:repeating-linear-gradient(90deg,#808080 0 1px, transparent 1px 2px);"></div>
<div class="t" style="left:65.5px;top:270px;font-size:12px;line-height:12px;color:#000;"><span style="display:inline-block;transform:scaleX(0.885);transform-origin:0 0">IP (VdS SecurIP)</span></div>
<div style="left:56px;top:292px;width:8px;height:1px;background:repeating-linear-gradient(90deg,#808080 0 1px, transparent 1px 2px);"></div>
<div class="t" style="left:65.5px;top:286px;font-size:12px;line-height:12px;color:#000;"><span style="display:inline-block;transform:scaleX(0.885);transform-origin:0 0">IP (VdS 2465-S2)</span></div>
<div style="left:56px;top:308px;width:8px;height:1px;background:repeating-linear-gradient(90deg,#808080 0 1px, transparent 1px 2px);"></div>
<div class="t" style="left:65.5px;top:302px;font-size:12px;line-height:12px;color:#000;"><span style="display:inline-block;transform:scaleX(0.885);transform-origin:0 0">VdS 2465</span></div>
<div style="left:56px;top:324px;width:8px;height:1px;background:repeating-linear-gradient(90deg,#808080 0 1px, transparent 1px 2px);"></div>
<div class="t" style="left:65.5px;top:318px;font-size:12px;line-height:12px;color:#000;"><span style="display:inline-block;transform:scaleX(0.885);transform-origin:0 0">SMS/Sprache/E-Mail</span></div>
<div style="left:56px;top:340px;width:8px;height:1px;background:repeating-linear-gradient(90deg,#808080 0 1px, transparent 1px 2px);"></div>
<div class="t" style="left:65.5px;top:334px;font-size:12px;line-height:12px;color:#000;"><span style="display:inline-block;transform:scaleX(0.885);transform-origin:0 0">SIA DC 05/09</span></div>
<div style="left:37px;top:356px;width:8px;height:1px;background:repeating-linear-gradient(90deg,#808080 0 1px, transparent 1px 2px);"></div>
<div class="t" style="left:46.5px;top:350px;font-size:12px;line-height:12px;color:#000;font-weight:bold;">Anwahlfolgen</div>
<div style="left:43px;top:372px;width:1px;height:1px;background:#808080;"></div>
<div style="left:30px;top:366px;width:11px;height:12px;background:#ffffe1;z-index:2"></div>
<svg style="left:30px;top:369px;z-index:3" width="10" height="7" viewBox="0 0 10 7"><path d="M0.8 1L5 5.2L9.2 1" fill="none" stroke="#404040" stroke-width="1.6"/></svg>
<div class="t" style="left:46.5px;top:366px;font-size:12px;line-height:12px;color:#000;font-weight:bold;">Meldelinien</div>
<div style="left:62px;top:388px;width:1px;height:1px;background:#808080;"></div>
<div style="left:49px;top:382px;width:11px;height:12px;background:#ffffe1;z-index:2"></div>
<svg style="left:51px;top:383px;z-index:3" width="7" height="10" viewBox="0 0 7 10"><path d="M1 0.8L5.2 5L1 9.2" fill="none" stroke="#a6a6a6" stroke-width="1.6"/></svg>
<div class="t" style="left:65.5px;top:382px;font-size:12px;line-height:12px;color:#000;"><span style="display:inline-block;transform:scaleX(0.885);transform-origin:0 0">Grundplatine</span></div>
<div style="left:43px;top:404px;width:1px;height:1px;background:#808080;"></div>
<div style="left:30px;top:398px;width:11px;height:12px;background:#ffffe1;z-index:2"></div>
<svg style="left:30px;top:401px;z-index:3" width="10" height="7" viewBox="0 0 10 7"><path d="M0.8 1L5 5.2L9.2 1" fill="none" stroke="#404040" stroke-width="1.6"/></svg>
<div class="t" style="left:46.5px;top:398px;font-size:12px;line-height:12px;color:#000;font-weight:bold;">Stehende Verbind.(IP)</div>
<div style="left:56px;top:420px;width:8px;height:1px;background:repeating-linear-gradient(90deg,#808080 0 1px, transparent 1px 2px);"></div>
<div class="t" style="left:65.5px;top:414px;font-size:12px;line-height:12px;color:#000;"><span style="display:inline-block;transform:scaleX(0.885);transform-origin:0 0">Aufbau</span></div>
<div style="left:56px;top:436px;width:8px;height:1px;background:repeating-linear-gradient(90deg,#808080 0 1px, transparent 1px 2px);"></div>
<div style="left:64px;top:428px;width:36px;height:16px;background:#0078d7;"></div>
<div class="t" style="left:65px;top:430px;font-size:12px;line-height:12px;color:#fff;"><span style="display:inline-block;transform:scaleX(0.885);transform-origin:0 0">Ausfall</span></div>
<div style="left:43px;top:452px;width:1px;height:1px;background:#808080;"></div>
<div style="left:30px;top:446px;width:11px;height:12px;background:#ffffe1;z-index:2"></div>
<svg style="left:32px;top:447px;z-index:3" width="7" height="10" viewBox="0 0 7 10"><path d="M1 0.8L5.2 5L1 9.2" fill="none" stroke="#a6a6a6" stroke-width="1.6"/></svg>
<div class="t" style="left:46.5px;top:446px;font-size:12px;line-height:12px;color:#000;font-weight:bold;">Schlüssel</div>
<div style="left:43px;top:468px;width:1px;height:1px;background:#808080;"></div>
<div style="left:30px;top:462px;width:11px;height:12px;background:#ffffe1;z-index:2"></div>
<svg style="left:30px;top:465px;z-index:3" width="10" height="7" viewBox="0 0 10 7"><path d="M0.8 1L5 5.2L9.2 1" fill="none" stroke="#404040" stroke-width="1.6"/></svg>
<div class="t" style="left:46.5px;top:462px;font-size:12px;line-height:12px;color:#000;font-weight:bold;">Ausgänge</div>
<div style="left:56px;top:484px;width:8px;height:1px;background:repeating-linear-gradient(90deg,#808080 0 1px, transparent 1px 2px);"></div>
<div class="t" style="left:65.5px;top:478px;font-size:12px;line-height:12px;color:#000;"><span style="display:inline-block;transform:scaleX(0.885);transform-origin:0 0">AUSG-Relais</span></div>
<div style="left:56px;top:500px;width:8px;height:1px;background:repeating-linear-gradient(90deg,#808080 0 1px, transparent 1px 2px);"></div>
<div class="t" style="left:65.5px;top:494px;font-size:12px;line-height:12px;color:#000;"><span style="display:inline-block;transform:scaleX(0.885);transform-origin:0 0">FS10-Relais</span></div>
<div style="left:62px;top:516px;width:1px;height:1px;background:#808080;"></div>
<div style="left:49px;top:510px;width:11px;height:12px;background:#ffffe1;z-index:2"></div>
<svg style="left:49px;top:513px;z-index:3" width="10" height="7" viewBox="0 0 10 7"><path d="M0.8 1L5 5.2L9.2 1" fill="none" stroke="#404040" stroke-width="1.6"/></svg>
<div class="t" style="left:65.5px;top:510px;font-size:12px;line-height:12px;color:#000;"><span style="display:inline-block;transform:scaleX(0.885);transform-origin:0 0">Fernschalten</span></div>
<div style="left:75px;top:532px;width:8px;height:1px;background:repeating-linear-gradient(90deg,#808080 0 1px, transparent 1px 2px);"></div>
<div class="t" style="left:84.5px;top:526px;font-size:12px;line-height:12px;color:#000;"><span style="display:inline-block;transform:scaleX(0.885);transform-origin:0 0">Grundplatine</span></div>
<div style="left:43px;top:548px;width:1px;height:1px;background:#808080;"></div>
<div style="left:30px;top:542px;width:11px;height:12px;background:#ffffe1;z-index:2"></div>
<svg style="left:30px;top:545px;z-index:3" width="10" height="7" viewBox="0 0 10 7"><path d="M0.8 1L5 5.2L9.2 1" fill="none" stroke="#404040" stroke-width="1.6"/></svg>
<div class="t" style="left:46.5px;top:542px;font-size:12px;line-height:12px;color:#000;font-weight:bold;">Störungen</div>
<div style="left:56px;top:564px;width:8px;height:1px;background:repeating-linear-gradient(90deg,#808080 0 1px, transparent 1px 2px);"></div>
<div class="t" style="left:65.5px;top:558px;font-size:12px;line-height:12px;color:#000;"><span style="display:inline-block;transform:scaleX(0.885);transform-origin:0 0">Ereignisse</span></div>
<div style="left:56px;top:580px;width:8px;height:1px;background:repeating-linear-gradient(90deg,#808080 0 1px, transparent 1px 2px);"></div>
<div class="t" style="left:65.5px;top:574px;font-size:12px;line-height:12px;color:#000;"><span style="display:inline-block;transform:scaleX(0.885);transform-origin:0 0">Ausgang</span></div>
<div style="left:37px;top:596px;width:8px;height:1px;background:repeating-linear-gradient(90deg,#808080 0 1px, transparent 1px 2px);"></div>
<div class="t" style="left:46.5px;top:590px;font-size:12px;line-height:12px;color:#000;font-weight:bold;">Testmeldung</div>
<div style="left:43px;top:612px;width:1px;height:1px;background:#808080;"></div>
<div style="left:30px;top:606px;width:11px;height:12px;background:#ffffe1;z-index:2"></div>
<svg style="left:30px;top:609px;z-index:3" width="10" height="7" viewBox="0 0 10 7"><path d="M0.8 1L5 5.2L9.2 1" fill="none" stroke="#404040" stroke-width="1.6"/></svg>
<div class="t" style="left:46.5px;top:606px;font-size:12px;line-height:12px;color:#000;font-weight:bold;">Fernservice</div>
<div style="left:56px;top:628px;width:8px;height:1px;background:repeating-linear-gradient(90deg,#808080 0 1px, transparent 1px 2px);"></div>
<div class="t" style="left:65.5px;top:622px;font-size:12px;line-height:12px;color:#000;"><span style="display:inline-block;transform:scaleX(0.885);transform-origin:0 0">GSM (CSD/SMS/Sprache)</span></div>
<div style="left:56px;top:644px;width:8px;height:1px;background:repeating-linear-gradient(90deg,#808080 0 1px, transparent 1px 2px);"></div>
<div class="t" style="left:65.5px;top:638px;font-size:12px;line-height:12px;color:#000;"><span style="display:inline-block;transform:scaleX(0.885);transform-origin:0 0">Ethernet</span></div>
<div style="left:56px;top:660px;width:8px;height:1px;background:repeating-linear-gradient(90deg,#808080 0 1px, transparent 1px 2px);"></div>
<div class="t" style="left:65.5px;top:654px;font-size:12px;line-height:12px;color:#000;"><span style="display:inline-block;transform:scaleX(0.885);transform-origin:0 0">Rückruf</span></div>
<div style="left:18px;top:676px;width:8px;height:1px;background:repeating-linear-gradient(90deg,#808080 0 1px, transparent 1px 2px);"></div>
<div class="t" style="left:27.5px;top:670px;font-size:12px;line-height:12px;color:#000;"><span style="display:inline-block;transform:scaleX(0.885);transform-origin:0 0">Ereignisspeicher</span></div>
<div style="left:16px;top:156px;width:1px;height:521px;background:repeating-linear-gradient(#808080 0 1px, transparent 1px 2px);"></div>
<div style="left:35px;top:156px;width:1px;height:457px;background:repeating-linear-gradient(#808080 0 1px, transparent 1px 2px);"></div>
<div style="left:54px;top:204px;width:1px;height:41px;background:repeating-linear-gradient(#808080 0 1px, transparent 1px 2px);"></div>
<div style="left:54px;top:268px;width:1px;height:73px;background:repeating-linear-gradient(#808080 0 1px, transparent 1px 2px);"></div>
<div style="left:54px;top:380px;width:1px;height:9px;background:repeating-linear-gradient(#808080 0 1px, transparent 1px 2px);"></div>
<div style="left:54px;top:412px;width:1px;height:25px;background:repeating-linear-gradient(#808080 0 1px, transparent 1px 2px);"></div>
<div style="left:54px;top:476px;width:1px;height:41px;background:repeating-linear-gradient(#808080 0 1px, transparent 1px 2px);"></div>
<div style="left:73px;top:524px;width:1px;height:9px;background:repeating-linear-gradient(#808080 0 1px, transparent 1px 2px);"></div>
<div style="left:54px;top:556px;width:1px;height:25px;background:repeating-linear-gradient(#808080 0 1px, transparent 1px 2px);"></div>
<div style="left:54px;top:620px;width:1px;height:41px;background:repeating-linear-gradient(#808080 0 1px, transparent 1px 2px);"></div>
<div class="t" style="left:10px;top:731px;font-size:12px;line-height:12px;color:#8c8c8c;font-weight:bold;text-shadow:1px 1px 0 #fff;">Komponenten:</div>
<div style="left:11px;top:752px;width:203px;height:19px;background:#cccccc;"></div>
<svg style="left:200px;top:758px" width="10" height="7" viewBox="0 0 10 7"><path d="M0.5 1L5 5.5L9.5 1" fill="none" stroke="#a0a0a0" stroke-width="1"/></svg>
<div style="left:12px;top:782px;width:94px;height:16px;background:#cccccc;"></div>
<div style="left:118px;top:782px;width:95px;height:16px;background:#cccccc;"></div>
<div class="t" style="left:12px;top:785px;font-size:11.5px;line-height:11.5px;color:#838383;letter-spacing:-0.2px;width:94px;text-align:center;">Hinzufügen....</div>
<div class="t" style="left:118px;top:785px;font-size:11.5px;line-height:11.5px;color:#838383;letter-spacing:-0.2px;width:95px;text-align:center;">Entfernen...</div>
<div style="left:43px;top:796px;width:5px;height:1px;background:#838383;"></div>
<div style="left:144px;top:796px;width:6px;height:1px;background:#838383;"></div>
<div style="left:222px;top:82px;width:1px;height:726px;background:#a0a0a0;"></div>
<div style="left:223px;top:82px;width:1px;height:726px;background:#b4b4b4;"></div>
<div style="left:224px;top:82px;width:1px;height:726px;background:#ffffff;"></div>
<div class="t" style="left:237px;top:95px;font-size:14px;line-height:14px;color:#000;font-weight:bold;letter-spacing:0.3px;white-space:pre;">1.7.2  Parametrierung / Stehende Verbind.(IP) / Ausfall</div>
<div style="left:225px;top:122px;width:1200px;height:686px;background:#ffffe1;"></div>
<div style="left:225px;top:122px;width:1200px;height:185px;background:#6e6e6e;"></div>
<div style="left:226px;top:123px;width:1198px;height:183px;background:#ffffe1;"></div>
<div style="left:225px;top:307px;width:1200px;height:3px;background:#f0f0f0;"></div>
<div style="left:225px;top:310px;width:1200px;height:185px;background:#6e6e6e;"></div>
<div style="left:226px;top:311px;width:1198px;height:183px;background:#ffffe1;"></div>
<div style="left:225px;top:495px;width:1200px;height:3px;background:#f0f0f0;"></div>
<div style="left:225px;top:498px;width:1200px;height:310px;background:#6e6e6e;"></div>
<div style="left:226px;top:499px;width:1198px;height:308px;background:#ffffe1;"></div>
<div style="left:226px;top:123px;width:771px;height:25px;background:#f0f0f0;"></div>
<div style="left:997px;top:123px;width:1px;height:26px;background:#000;"></div>
<div class="t" style="left:229px;top:130px;font-size:12px;line-height:12px;color:#000;font-weight:bold;word-spacing:-1px;">Störungsmeldung nach Ausfall der stehenden Verbindung (einmalig)</div>
<div style="left:225px;top:148px;width:773px;height:37px;background:#000;"></div>
<div style="left:226px;top:149px;width:771px;height:35px;background:#82a2f4;"></div>
<div style="left:225px;top:148px;width:1px;height:37px;background:#000;"></div>
<div style="left:326px;top:148px;width:1px;height:37px;background:#000;"></div>
<div style="left:372px;top:148px;width:1px;height:37px;background:#000;"></div>
<div style="left:458px;top:148px;width:1px;height:37px;background:#000;"></div>
<div style="left:790px;top:148px;width:1px;height:37px;background:#000;"></div>
<div style="left:876px;top:148px;width:1px;height:37px;background:#000;"></div>
<div style="left:997px;top:148px;width:1px;height:37px;background:#000;"></div>
<div style="left:639px;top:166px;width:1px;height:19px;background:#000;"></div>
<div style="left:458px;top:166px;width:333px;height:1px;background:#000;"></div>
<div style="left:225px;top:184px;width:773px;height:73px;background:#808080;"></div>
<div style="left:226px;top:185px;width:100px;height:17px;background:#ffffff;"></div>
<div style="left:226px;top:186px;width:99px;height:15px;background:#f0f0f0;"></div>
<div style="left:327px;top:185px;width:45px;height:17px;background:#fffff0;"></div>
<div style="left:328px;top:186px;width:43px;height:15px;background:#ffffe1;"></div>
<div style="left:373px;top:185px;width:85px;height:17px;background:#fafafa;"></div>
<div style="left:374px;top:186px;width:83px;height:15px;background:#f0f0f0;"></div>
<div style="left:459px;top:185px;width:180px;height:17px;background:#fafafa;"></div>
<div style="left:460px;top:186px;width:178px;height:15px;background:#f0f0f0;"></div>
<div style="left:640px;top:185px;width:150px;height:17px;background:#fafafa;"></div>
<div style="left:641px;top:186px;width:148px;height:15px;background:#f0f0f0;"></div>
<div style="left:791px;top:185px;width:40px;height:17px;background:#fafafa;"></div>
<div style="left:792px;top:186px;width:38px;height:15px;background:#f0f0f0;"></div>
<div style="left:832px;top:185px;width:44px;height:17px;background:#fafafa;"></div>
<div style="left:833px;top:186px;width:42px;height:15px;background:#f0f0f0;"></div>
<div style="left:877px;top:185px;width:120px;height:17px;background:#fafafa;"></div>
<div style="left:878px;top:186px;width:118px;height:15px;background:#f0f0f0;"></div>
<div style="left:226px;top:203px;width:100px;height:17px;background:#ffffff;"></div>
<div style="left:226px;top:204px;width:99px;height:15px;background:#f0f0f0;"></div>
<div style="left:327px;top:203px;width:45px;height:17px;background:#fafafa;"></div>
<div style="left:328px;top:204px;width:43px;height:15px;background:#f0f0f0;"></div>
<div style="left:373px;top:203px;width:85px;height:17px;background:#fafafa;"></div>
<div style="left:374px;top:204px;width:83px;height:15px;background:#f0f0f0;"></div>
<div style="left:459px;top:203px;width:180px;height:17px;background:#fafafa;"></div>
<div style="left:460px;top:204px;width:178px;height:15px;background:#f0f0f0;"></div>
<div style="left:640px;top:203px;width:150px;height:17px;background:#fafafa;"></div>
<div style="left:641px;top:204px;width:148px;height:15px;background:#f0f0f0;"></div>
<div style="left:791px;top:203px;width:40px;height:17px;background:#fafafa;"></div>
<div style="left:792px;top:204px;width:38px;height:15px;background:#f0f0f0;"></div>
<div style="left:832px;top:203px;width:44px;height:17px;background:#fafafa;"></div>
<div style="left:833px;top:204px;width:42px;height:15px;background:#f0f0f0;"></div>
<div style="left:877px;top:203px;width:120px;height:17px;background:#fafafa;"></div>
<div style="left:878px;top:204px;width:118px;height:15px;background:#f0f0f0;"></div>
<div style="left:226px;top:221px;width:100px;height:17px;background:#ffffff;"></div>
<div style="left:226px;top:222px;width:99px;height:15px;background:#f0f0f0;"></div>
<div style="left:327px;top:221px;width:45px;height:17px;background:#fafafa;"></div>
<div style="left:328px;top:222px;width:43px;height:15px;background:#f0f0f0;"></div>
<div style="left:373px;top:221px;width:85px;height:17px;background:#fafafa;"></div>
<div style="left:374px;top:222px;width:83px;height:15px;background:#f0f0f0;"></div>
<div style="left:459px;top:221px;width:180px;height:17px;background:#fafafa;"></div>
<div style="left:460px;top:222px;width:178px;height:15px;background:#f0f0f0;"></div>
<div style="left:640px;top:221px;width:150px;height:17px;background:#fafafa;"></div>
<div style="left:641px;top:222px;width:148px;height:15px;background:#f0f0f0;"></div>
<div style="left:791px;top:221px;width:40px;height:17px;background:#fafafa;"></div>
<div style="left:792px;top:222px;width:38px;height:15px;background:#f0f0f0;"></div>
<div style="left:832px;top:221px;width:44px;height:17px;background:#fafafa;"></div>
<div style="left:833px;top:222px;width:42px;height:15px;background:#f0f0f0;"></div>
<div style="left:877px;top:221px;width:120px;height:17px;background:#fafafa;"></div>
<div style="left:878px;top:222px;width:118px;height:15px;background:#f0f0f0;"></div>
<div style="left:226px;top:239px;width:100px;height:17px;background:#ffffff;"></div>
<div style="left:226px;top:240px;width:99px;height:15px;background:#f0f0f0;"></div>
<div style="left:327px;top:239px;width:45px;height:17px;background:#fafafa;"></div>
<div style="left:328px;top:240px;width:43px;height:15px;background:#f0f0f0;"></div>
<div style="left:373px;top:239px;width:85px;height:17px;background:#fafafa;"></div>
<div style="left:374px;top:240px;width:83px;height:15px;background:#f0f0f0;"></div>
<div style="left:459px;top:239px;width:180px;height:17px;background:#fafafa;"></div>
<div style="left:460px;top:240px;width:178px;height:15px;background:#f0f0f0;"></div>
<div style="left:640px;top:239px;width:150px;height:17px;background:#fafafa;"></div>
<div style="left:641px;top:240px;width:148px;height:15px;background:#f0f0f0;"></div>
<div style="left:791px;top:239px;width:40px;height:17px;background:#fafafa;"></div>
<div style="left:792px;top:240px;width:38px;height:15px;background:#f0f0f0;"></div>
<div style="left:832px;top:239px;width:44px;height:17px;background:#fafafa;"></div>
<div style="left:833px;top:240px;width:42px;height:15px;background:#f0f0f0;"></div>
<div style="left:877px;top:239px;width:120px;height:17px;background:#fafafa;"></div>
<div style="left:878px;top:240px;width:118px;height:15px;background:#f0f0f0;"></div>
<div style="left:225px;top:184px;width:1px;height:73px;background:#000;"></div>
<div style="left:326px;top:184px;width:1px;height:73px;background:#000;"></div>
<div style="left:225px;top:184px;width:102px;height:1px;background:#000;"></div>
<div style="left:225px;top:202px;width:102px;height:1px;background:#000;"></div>
<div style="left:225px;top:220px;width:102px;height:1px;background:#000;"></div>
<div style="left:225px;top:238px;width:102px;height:1px;background:#000;"></div>
<div style="left:225px;top:256px;width:102px;height:1px;background:#000;"></div>
<div style="left:225px;top:184px;width:773px;height:1px;background:#000;"></div>
<div class="t" style="left:226px;top:156px;font-size:12px;line-height:12px;color:#0000a0;font-weight:bold;width:101px;text-align:center;">Stehende</div>
<div class="t" style="left:226px;top:169px;font-size:12px;line-height:12px;color:#0000a0;font-weight:bold;width:101px;text-align:center;">Verbindung</div>
<div class="t" style="left:327px;top:169px;font-size:12px;line-height:12px;color:#0000a0;font-weight:bold;width:46px;text-align:center;">Aktiv</div>
<div class="t" style="left:373px;top:169px;font-size:12px;line-height:12px;color:#0000a0;font-weight:bold;width:86px;text-align:center;">Anwahlfolge</div>
<div class="t" style="left:459px;top:152px;font-size:12px;line-height:12px;color:#0000a0;font-weight:bold;width:332px;text-align:center;">Meldetext</div>
<div class="t" style="left:459px;top:170px;font-size:12px;line-height:12px;color:#0000a0;font-weight:bold;width:181px;text-align:center;">Störung aufgetreten</div>
<div class="t" style="left:640px;top:170px;font-size:12px;line-height:12px;color:#0000a0;font-weight:bold;width:151px;text-align:center;">Störung beseitigt</div>
<div class="t" style="left:791px;top:156px;font-size:12px;line-height:12px;color:#0000a0;font-weight:bold;width:86px;text-align:center;">Mindest-</div>
<div class="t" style="left:791px;top:169px;font-size:12px;line-height:12px;color:#0000a0;font-weight:bold;width:86px;text-align:center;">Signaldauer</div>
<div class="t" style="left:877px;top:156px;font-size:12px;line-height:12px;color:#0000a0;font-weight:bold;width:121px;text-align:center;">Mit Abschalte-</div>
<div class="t" style="left:877px;top:169px;font-size:12px;line-height:12px;color:#0000a0;font-weight:bold;width:121px;text-align:center;">ML abschalten</div>
<div class="t" style="left:226px;top:188px;font-size:12px;line-height:12px;color:#000;width:101px;text-align:center;"><span style="display:inline-block;transform:scaleX(0.885);transform-origin:50% 0">IP-Verbindung 1</span></div>
<div class="t" style="left:226px;top:206px;font-size:12px;line-height:12px;color:#000;width:101px;text-align:center;"><span style="display:inline-block;transform:scaleX(0.885);transform-origin:50% 0">IP-Verbindung 2</span></div>
<div class="t" style="left:226px;top:224px;font-size:12px;line-height:12px;color:#000;width:101px;text-align:center;"><span style="display:inline-block;transform:scaleX(0.885);transform-origin:50% 0">IP-Verbindung 3</span></div>
<div class="t" style="left:226px;top:242px;font-size:12px;line-height:12px;color:#000;width:101px;text-align:center;"><span style="display:inline-block;transform:scaleX(0.885);transform-origin:50% 0">IP-Verbindung 4</span></div>
<div class="t" style="left:327px;top:188px;font-size:12px;line-height:12px;color:#000;width:46px;text-align:center;"><span style="display:inline-block;transform:scaleX(0.885);transform-origin:50% 0">---</span></div>
<div class="t" style="left:376px;top:188px;font-size:12px;line-height:12px;color:#000;white-space:pre;"><span style="display:inline-block;transform:scaleX(0.885);transform-origin:0 0">------</span></div>
<div class="t" style="left:791px;top:188px;font-size:12px;line-height:12px;color:#000;width:41px;text-align:center;"><span style="display:inline-block;transform:scaleX(0.885);transform-origin:50% 0">0 min</span></div>
<div class="t" style="left:832px;top:188px;font-size:12px;line-height:12px;color:#000;width:45px;text-align:center;"><span style="display:inline-block;transform:scaleX(0.885);transform-origin:50% 0">0 sec.</span></div>
<div style="left:226px;top:311px;width:1097px;height:25px;background:#f0f0f0;"></div>
<div style="left:1323px;top:311px;width:1px;height:26px;background:#000;"></div>
<div class="t" style="left:229px;top:318px;font-size:12px;line-height:12px;color:#000;font-weight:bold;word-spacing:-1px;">Testmeldung nach Ausfall der stehenden Verbindung (zyklisch)</div>
<div style="left:225px;top:336px;width:1099px;height:37px;background:#000;"></div>
<div style="left:226px;top:337px;width:1097px;height:35px;background:#82a2f4;"></div>
<div style="left:225px;top:336px;width:1px;height:37px;background:#000;"></div>
<div style="left:326px;top:336px;width:1px;height:37px;background:#000;"></div>
<div style="left:377px;top:336px;width:1px;height:37px;background:#000;"></div>
<div style="left:747px;top:336px;width:1px;height:37px;background:#000;"></div>
<div style="left:898px;top:336px;width:1px;height:37px;background:#000;"></div>
<div style="left:1050px;top:336px;width:1px;height:37px;background:#000;"></div>
<div style="left:1202px;top:336px;width:1px;height:37px;background:#000;"></div>
<div style="left:1323px;top:336px;width:1px;height:37px;background:#000;"></div>
<div style="left:969px;top:354px;width:1px;height:19px;background:#000;"></div>
<div style="left:1121px;top:354px;width:1px;height:19px;background:#000;"></div>
<div style="left:898px;top:354px;width:305px;height:1px;background:#000;"></div>
<div style="left:225px;top:372px;width:1099px;height:73px;background:#808080;"></div>
<div style="left:226px;top:373px;width:100px;height:17px;background:#ffffff;"></div>
<div style="left:226px;top:374px;width:99px;height:15px;background:#f0f0f0;"></div>
<div style="left:327px;top:373px;width:50px;height:17px;background:#fffff0;"></div>
<div style="left:328px;top:374px;width:48px;height:15px;background:#ffffe1;"></div>
<div style="left:378px;top:373px;width:369px;height:17px;background:#fffff0;"></div>
<div style="left:379px;top:374px;width:367px;height:15px;background:#ffffe1;"></div>
<div style="left:748px;top:373px;width:150px;height:17px;background:#fffff0;"></div>
<div style="left:749px;top:374px;width:148px;height:15px;background:#ffffe1;"></div>
<div style="left:899px;top:373px;width:70px;height:17px;background:#fffff0;"></div>
<div style="left:900px;top:374px;width:68px;height:15px;background:#ffffe1;"></div>
<div style="left:970px;top:373px;width:80px;height:17px;background:#fffff0;"></div>
<div style="left:971px;top:374px;width:78px;height:15px;background:#ffffe1;"></div>
<div style="left:1051px;top:373px;width:70px;height:17px;background:#fffff0;"></div>
<div style="left:1052px;top:374px;width:68px;height:15px;background:#ffffe1;"></div>
<div style="left:1122px;top:373px;width:80px;height:17px;background:#fffff0;"></div>
<div style="left:1123px;top:374px;width:78px;height:15px;background:#ffffe1;"></div>
<div style="left:1203px;top:373px;width:120px;height:17px;background:#fafafa;"></div>
<div style="left:1204px;top:374px;width:118px;height:15px;background:#f0f0f0;"></div>
<div style="left:226px;top:391px;width:100px;height:17px;background:#ffffff;"></div>
<div style="left:226px;top:392px;width:99px;height:15px;background:#f0f0f0;"></div>
<div style="left:327px;top:391px;width:50px;height:17px;background:#fafafa;"></div>
<div style="left:328px;top:392px;width:48px;height:15px;background:#f0f0f0;"></div>
<div style="left:378px;top:391px;width:369px;height:17px;background:#fafafa;"></div>
<div style="left:379px;top:392px;width:367px;height:15px;background:#f0f0f0;"></div>
<div style="left:748px;top:391px;width:150px;height:17px;background:#fafafa;"></div>
<div style="left:749px;top:392px;width:148px;height:15px;background:#f0f0f0;"></div>
<div style="left:899px;top:391px;width:70px;height:17px;background:#fafafa;"></div>
<div style="left:900px;top:392px;width:68px;height:15px;background:#f0f0f0;"></div>
<div style="left:970px;top:391px;width:80px;height:17px;background:#fafafa;"></div>
<div style="left:971px;top:392px;width:78px;height:15px;background:#f0f0f0;"></div>
<div style="left:1051px;top:391px;width:70px;height:17px;background:#fafafa;"></div>
<div style="left:1052px;top:392px;width:68px;height:15px;background:#f0f0f0;"></div>
<div style="left:1122px;top:391px;width:80px;height:17px;background:#fafafa;"></div>
<div style="left:1123px;top:392px;width:78px;height:15px;background:#f0f0f0;"></div>
<div style="left:1203px;top:391px;width:120px;height:17px;background:#fafafa;"></div>
<div style="left:1204px;top:392px;width:118px;height:15px;background:#f0f0f0;"></div>
<div style="left:226px;top:409px;width:100px;height:17px;background:#ffffff;"></div>
<div style="left:226px;top:410px;width:99px;height:15px;background:#f0f0f0;"></div>
<div style="left:327px;top:409px;width:50px;height:17px;background:#fafafa;"></div>
<div style="left:328px;top:410px;width:48px;height:15px;background:#f0f0f0;"></div>
<div style="left:378px;top:409px;width:369px;height:17px;background:#fafafa;"></div>
<div style="left:379px;top:410px;width:367px;height:15px;background:#f0f0f0;"></div>
<div style="left:748px;top:409px;width:150px;height:17px;background:#fafafa;"></div>
<div style="left:749px;top:410px;width:148px;height:15px;background:#f0f0f0;"></div>
<div style="left:899px;top:409px;width:70px;height:17px;background:#fafafa;"></div>
<div style="left:900px;top:410px;width:68px;height:15px;background:#f0f0f0;"></div>
<div style="left:970px;top:409px;width:80px;height:17px;background:#fafafa;"></div>
<div style="left:971px;top:410px;width:78px;height:15px;background:#f0f0f0;"></div>
<div style="left:1051px;top:409px;width:70px;height:17px;background:#fafafa;"></div>
<div style="left:1052px;top:410px;width:68px;height:15px;background:#f0f0f0;"></div>
<div style="left:1122px;top:409px;width:80px;height:17px;background:#fafafa;"></div>
<div style="left:1123px;top:410px;width:78px;height:15px;background:#f0f0f0;"></div>
<div style="left:1203px;top:409px;width:120px;height:17px;background:#fafafa;"></div>
<div style="left:1204px;top:410px;width:118px;height:15px;background:#f0f0f0;"></div>
<div style="left:226px;top:427px;width:100px;height:17px;background:#ffffff;"></div>
<div style="left:226px;top:428px;width:99px;height:15px;background:#f0f0f0;"></div>
<div style="left:327px;top:427px;width:50px;height:17px;background:#fafafa;"></div>
<div style="left:328px;top:428px;width:48px;height:15px;background:#f0f0f0;"></div>
<div style="left:378px;top:427px;width:369px;height:17px;background:#fafafa;"></div>
<div style="left:379px;top:428px;width:367px;height:15px;background:#f0f0f0;"></div>
<div style="left:748px;top:427px;width:150px;height:17px;background:#fafafa;"></div>
<div style="left:749px;top:428px;width:148px;height:15px;background:#f0f0f0;"></div>
<div style="left:899px;top:427px;width:70px;height:17px;background:#fafafa;"></div>
<div style="left:900px;top:428px;width:68px;height:15px;background:#f0f0f0;"></div>
<div style="left:970px;top:427px;width:80px;height:17px;background:#fafafa;"></div>
<div style="left:971px;top:428px;width:78px;height:15px;background:#f0f0f0;"></div>
<div style="left:1051px;top:427px;width:70px;height:17px;background:#fafafa;"></div>
<div style="left:1052px;top:428px;width:68px;height:15px;background:#f0f0f0;"></div>
<div style="left:1122px;top:427px;width:80px;height:17px;background:#fafafa;"></div>
<div style="left:1123px;top:428px;width:78px;height:15px;background:#f0f0f0;"></div>
<div style="left:1203px;top:427px;width:120px;height:17px;background:#fafafa;"></div>
<div style="left:1204px;top:428px;width:118px;height:15px;background:#f0f0f0;"></div>
<div style="left:225px;top:372px;width:1px;height:73px;background:#000;"></div>
<div style="left:326px;top:372px;width:1px;height:73px;background:#000;"></div>
<div style="left:225px;top:372px;width:102px;height:1px;background:#000;"></div>
<div style="left:225px;top:390px;width:102px;height:1px;background:#000;"></div>
<div style="left:225px;top:408px;width:102px;height:1px;background:#000;"></div>
<div style="left:225px;top:426px;width:102px;height:1px;background:#000;"></div>
<div style="left:225px;top:444px;width:102px;height:1px;background:#000;"></div>
<div style="left:225px;top:372px;width:1099px;height:1px;background:#000;"></div>
<div class="t" style="left:226px;top:344px;font-size:12px;line-height:12px;color:#0000a0;font-weight:bold;width:101px;text-align:center;">Stehende</div>
<div class="t" style="left:226px;top:357px;font-size:12px;line-height:12px;color:#0000a0;font-weight:bold;width:101px;text-align:center;">Verbindung</div>
<div class="t" style="left:327px;top:357px;font-size:12px;line-height:12px;color:#0000a0;font-weight:bold;width:51px;text-align:center;">Aktiv</div>
<div class="t" style="left:378px;top:357px;font-size:12px;line-height:12px;color:#0000a0;font-weight:bold;width:370px;text-align:center;">Anwahlfolge</div>
<div class="t" style="left:748px;top:357px;font-size:12px;line-height:12px;color:#0000a0;font-weight:bold;width:151px;text-align:center;">Meldetext</div>
<div class="t" style="left:899px;top:340px;font-size:12px;line-height:12px;color:#0000a0;font-weight:bold;width:152px;text-align:center;">Mindestsignaldauer</div>
<div class="t" style="left:899px;top:358px;font-size:12px;line-height:12px;color:#0000a0;font-weight:bold;width:71px;text-align:center;">Min.</div>
<div class="t" style="left:970px;top:358px;font-size:12px;line-height:12px;color:#0000a0;font-weight:bold;width:81px;text-align:center;">Sek</div>
<div class="t" style="left:1122px;top:358px;font-size:12px;line-height:12px;color:#0000a0;font-weight:bold;width:81px;text-align:center;">Min.</div>
<div class="t" style="left:1051px;top:358px;font-size:12px;line-height:12px;color:#0000a0;font-weight:bold;width:71px;text-align:center;">Std.</div>
<div class="t" style="left:1203px;top:344px;font-size:12px;line-height:12px;color:#0000a0;font-weight:bold;width:121px;text-align:center;">Mit Abschalte-</div>
<div class="t" style="left:1203px;top:357px;font-size:12px;line-height:12px;color:#0000a0;font-weight:bold;width:121px;text-align:center;">ML abschalten</div>
<div class="t" style="left:226px;top:376px;font-size:12px;line-height:12px;color:#000;width:101px;text-align:center;"><span style="display:inline-block;transform:scaleX(0.885);transform-origin:50% 0">IP-Verbindung 1</span></div>
<div class="t" style="left:226px;top:394px;font-size:12px;line-height:12px;color:#000;width:101px;text-align:center;"><span style="display:inline-block;transform:scaleX(0.885);transform-origin:50% 0">IP-Verbindung 2</span></div>
<div class="t" style="left:226px;top:412px;font-size:12px;line-height:12px;color:#000;width:101px;text-align:center;"><span style="display:inline-block;transform:scaleX(0.885);transform-origin:50% 0">IP-Verbindung 3</span></div>
<div class="t" style="left:226px;top:430px;font-size:12px;line-height:12px;color:#000;width:101px;text-align:center;"><span style="display:inline-block;transform:scaleX(0.885);transform-origin:50% 0">IP-Verbindung 4</span></div>
<div class="t" style="left:327px;top:376px;font-size:12px;line-height:12px;color:#000;width:51px;text-align:center;"><span style="display:inline-block;transform:scaleX(0.885);transform-origin:50% 0">Ja</span></div>
<div class="t" style="left:381px;top:376px;font-size:12px;line-height:12px;color:#000;white-space:pre;"><span style="display:inline-block;transform:scaleX(0.885);transform-origin:0 0">3:  (Bedarfsgesteuert: TN 2: Mobilfunk-IP (VdS 2465-S2): Bedarfsgesteuert)</span></div>
<div class="t" style="left:751px;top:376px;font-size:12px;line-height:12px;color:#000;white-space:pre;"><span style="display:inline-block;transform:scaleX(0.885);transform-origin:0 0">Testmeldung IP-Verb. 1</span></div>
<div class="t" style="left:899px;top:376px;font-size:12px;line-height:12px;color:#000;width:71px;text-align:center;"><span style="display:inline-block;transform:scaleX(0.885);transform-origin:50% 0">0 min</span></div>
<div class="t" style="left:970px;top:376px;font-size:12px;line-height:12px;color:#000;width:81px;text-align:center;"><span style="display:inline-block;transform:scaleX(0.885);transform-origin:50% 0">0 sec.</span></div>
<div class="t" style="left:1051px;top:376px;font-size:12px;line-height:12px;color:#000;width:71px;text-align:center;"><span style="display:inline-block;transform:scaleX(0.885);transform-origin:50% 0">0 Std.</span></div>
<div style="left:1095px;top:337px;width:68px;height:15px;background:#80a000;"></div>
<div class="t" style="left:1051px;top:340px;font-size:12px;line-height:12px;color:#000;font-weight:bold;width:152px;text-align:center;">Abstand</div>
<div style="left:1130px;top:373px;width:63px;height:17px;background:#ffff00;"></div>
<div style="left:1130px;top:373px;width:1px;height:1px;background:#ffffe1;"></div>
<div class="t" style="left:1122px;top:376px;font-size:12px;line-height:12px;color:#000;width:81px;text-align:center;"><span style="display:inline-block;transform:scaleX(0.885);transform-origin:50% 0">10 min</span></div>
<div class="t" style="left:1203px;top:376px;font-size:12px;line-height:12px;color:#000;width:121px;text-align:center;"><span style="display:inline-block;transform:scaleX(0.885);transform-origin:50% 0">---</span></div>
<div style="left:378px;top:373px;width:368px;height:17px;border:1px dotted #000"></div>
<div style="left:226px;top:499px;width:850px;height:25px;background:#f0f0f0;"></div>
<div style="left:1076px;top:499px;width:1px;height:26px;background:#000;"></div>
<div class="t" style="left:229px;top:506px;font-size:12px;line-height:12px;color:#000;font-weight:bold;word-spacing:-1px;">Verbindungsaufbau</div>
<div style="left:225px;top:524px;width:852px;height:37px;background:#000;"></div>
<div style="left:226px;top:525px;width:850px;height:35px;background:#b0b0dc;"></div>
<div style="left:225px;top:524px;width:1px;height:37px;background:#000;"></div>
<div style="left:319px;top:524px;width:1px;height:37px;background:#000;"></div>
<div style="left:358px;top:524px;width:1px;height:37px;background:#000;"></div>
<div style="left:635px;top:524px;width:1px;height:37px;background:#000;"></div>
<div style="left:742px;top:524px;width:1px;height:37px;background:#000;"></div>
<div style="left:874px;top:524px;width:1px;height:37px;background:#000;"></div>
<div style="left:963px;top:524px;width:1px;height:37px;background:#000;"></div>
<div style="left:1076px;top:524px;width:1px;height:37px;background:#000;"></div>
<div style="left:225px;top:560px;width:852px;height:73px;background:#808080;"></div>
<div style="left:226px;top:561px;width:93px;height:17px;background:#ffffff;"></div>
<div style="left:226px;top:562px;width:92px;height:15px;background:#f0f0f0;"></div>
<div style="left:320px;top:561px;width:38px;height:17px;background:#fafafa;"></div>
<div style="left:321px;top:562px;width:36px;height:15px;background:#f0f0f0;"></div>
<div style="left:359px;top:561px;width:276px;height:17px;background:#fafafa;"></div>
<div style="left:360px;top:562px;width:274px;height:15px;background:#f0f0f0;"></div>
<div style="left:636px;top:561px;width:106px;height:17px;background:#fafafa;"></div>
<div style="left:637px;top:562px;width:104px;height:15px;background:#f0f0f0;"></div>
<div style="left:743px;top:561px;width:65px;height:17px;background:#fafafa;"></div>
<div style="left:744px;top:562px;width:63px;height:15px;background:#f0f0f0;"></div>
<div style="left:809px;top:561px;width:65px;height:17px;background:#fafafa;"></div>
<div style="left:810px;top:562px;width:63px;height:15px;background:#f0f0f0;"></div>
<div style="left:875px;top:561px;width:88px;height:17px;background:#fafafa;"></div>
<div style="left:876px;top:562px;width:86px;height:15px;background:#f0f0f0;"></div>
<div style="left:964px;top:561px;width:112px;height:17px;background:#fafafa;"></div>
<div style="left:965px;top:562px;width:110px;height:15px;background:#f0f0f0;"></div>
<div style="left:226px;top:579px;width:93px;height:17px;background:#ffffff;"></div>
<div style="left:226px;top:580px;width:92px;height:15px;background:#f0f0f0;"></div>
<div style="left:320px;top:579px;width:38px;height:17px;background:#fafafa;"></div>
<div style="left:321px;top:580px;width:36px;height:15px;background:#f0f0f0;"></div>
<div style="left:359px;top:579px;width:276px;height:17px;background:#fafafa;"></div>
<div style="left:360px;top:580px;width:274px;height:15px;background:#f0f0f0;"></div>
<div style="left:636px;top:579px;width:106px;height:17px;background:#fafafa;"></div>
<div style="left:637px;top:580px;width:104px;height:15px;background:#f0f0f0;"></div>
<div style="left:743px;top:579px;width:65px;height:17px;background:#fafafa;"></div>
<div style="left:744px;top:580px;width:63px;height:15px;background:#f0f0f0;"></div>
<div style="left:809px;top:579px;width:65px;height:17px;background:#fafafa;"></div>
<div style="left:810px;top:580px;width:63px;height:15px;background:#f0f0f0;"></div>
<div style="left:875px;top:579px;width:88px;height:17px;background:#fafafa;"></div>
<div style="left:876px;top:580px;width:86px;height:15px;background:#f0f0f0;"></div>
<div style="left:964px;top:579px;width:112px;height:17px;background:#fafafa;"></div>
<div style="left:965px;top:580px;width:110px;height:15px;background:#f0f0f0;"></div>
<div style="left:226px;top:597px;width:93px;height:17px;background:#ffffff;"></div>
<div style="left:226px;top:598px;width:92px;height:15px;background:#f0f0f0;"></div>
<div style="left:320px;top:597px;width:38px;height:17px;background:#fafafa;"></div>
<div style="left:321px;top:598px;width:36px;height:15px;background:#f0f0f0;"></div>
<div style="left:359px;top:597px;width:276px;height:17px;background:#fafafa;"></div>
<div style="left:360px;top:598px;width:274px;height:15px;background:#f0f0f0;"></div>
<div style="left:636px;top:597px;width:106px;height:17px;background:#fafafa;"></div>
<div style="left:637px;top:598px;width:104px;height:15px;background:#f0f0f0;"></div>
<div style="left:743px;top:597px;width:65px;height:17px;background:#fafafa;"></div>
<div style="left:744px;top:598px;width:63px;height:15px;background:#f0f0f0;"></div>
<div style="left:809px;top:597px;width:65px;height:17px;background:#fafafa;"></div>
<div style="left:810px;top:598px;width:63px;height:15px;background:#f0f0f0;"></div>
<div style="left:875px;top:597px;width:88px;height:17px;background:#fafafa;"></div>
<div style="left:876px;top:598px;width:86px;height:15px;background:#f0f0f0;"></div>
<div style="left:964px;top:597px;width:112px;height:17px;background:#fafafa;"></div>
<div style="left:965px;top:598px;width:110px;height:15px;background:#f0f0f0;"></div>
<div style="left:226px;top:615px;width:93px;height:17px;background:#ffffff;"></div>
<div style="left:226px;top:616px;width:92px;height:15px;background:#f0f0f0;"></div>
<div style="left:320px;top:615px;width:38px;height:17px;background:#fafafa;"></div>
<div style="left:321px;top:616px;width:36px;height:15px;background:#f0f0f0;"></div>
<div style="left:359px;top:615px;width:276px;height:17px;background:#fafafa;"></div>
<div style="left:360px;top:616px;width:274px;height:15px;background:#f0f0f0;"></div>
<div style="left:636px;top:615px;width:106px;height:17px;background:#fafafa;"></div>
<div style="left:637px;top:616px;width:104px;height:15px;background:#f0f0f0;"></div>
<div style="left:743px;top:615px;width:65px;height:17px;background:#fafafa;"></div>
<div style="left:744px;top:616px;width:63px;height:15px;background:#f0f0f0;"></div>
<div style="left:809px;top:615px;width:65px;height:17px;background:#fafafa;"></div>
<div style="left:810px;top:616px;width:63px;height:15px;background:#f0f0f0;"></div>
<div style="left:875px;top:615px;width:88px;height:17px;background:#fafafa;"></div>
<div style="left:876px;top:616px;width:86px;height:15px;background:#f0f0f0;"></div>
<div style="left:964px;top:615px;width:112px;height:17px;background:#fafafa;"></div>
<div style="left:965px;top:616px;width:110px;height:15px;background:#f0f0f0;"></div>
<div style="left:225px;top:560px;width:1px;height:73px;background:#000;"></div>
<div style="left:319px;top:560px;width:1px;height:73px;background:#000;"></div>
<div style="left:225px;top:560px;width:95px;height:1px;background:#000;"></div>
<div style="left:225px;top:578px;width:95px;height:1px;background:#000;"></div>
<div style="left:225px;top:596px;width:95px;height:1px;background:#000;"></div>
<div style="left:225px;top:614px;width:95px;height:1px;background:#000;"></div>
<div style="left:225px;top:632px;width:95px;height:1px;background:#000;"></div>
<div style="left:225px;top:560px;width:852px;height:1px;background:#000;"></div>
<div class="t" style="left:226px;top:532px;font-size:12px;line-height:12px;color:#0000a0;font-weight:bold;width:94px;text-align:center;">Stehende</div>
<div class="t" style="left:226px;top:545px;font-size:12px;line-height:12px;color:#0000a0;font-weight:bold;width:94px;text-align:center;">Verbindung</div>
<div class="t" style="left:320px;top:545px;font-size:12px;line-height:12px;color:#0000a0;font-weight:bold;width:39px;text-align:center;">Aktiv</div>
<div class="t" style="left:359px;top:545px;font-size:12px;line-height:12px;color:#0000a0;font-weight:bold;width:277px;text-align:center;">Teilnehmer</div>
<div class="t" style="left:636px;top:545px;font-size:12px;line-height:12px;color:#0000a0;font-weight:bold;width:107px;text-align:center;">Meldetext</div>
<div class="t" style="left:743px;top:545px;font-size:12px;line-height:12px;color:#0000a0;font-weight:bold;width:132px;text-align:center;">Meldungszeit</div>
<div class="t" style="left:875px;top:532px;font-size:12px;line-height:12px;color:#0000a0;font-weight:bold;width:89px;text-align:center;">Wiederanlauf</div>
<div class="t" style="left:875px;top:545px;font-size:12px;line-height:12px;color:#0000a0;font-weight:bold;width:89px;text-align:center;">Neustart</div>
<div class="t" style="left:964px;top:532px;font-size:12px;line-height:12px;color:#0000a0;font-weight:bold;width:113px;text-align:center;">Zeit zwischen den</div>
<div class="t" style="left:964px;top:545px;font-size:12px;line-height:12px;color:#0000a0;font-weight:bold;width:113px;text-align:center;">Aufbauversuchen</div>
<div class="t" style="left:226px;top:564px;font-size:12px;line-height:12px;color:#000;width:94px;text-align:center;"><span style="display:inline-block;transform:scaleX(0.885);transform-origin:50% 0">IP-Verbindung 1</span></div>
<div class="t" style="left:226px;top:582px;font-size:12px;line-height:12px;color:#000;width:94px;text-align:center;"><span style="display:inline-block;transform:scaleX(0.885);transform-origin:50% 0">IP-Verbindung 2</span></div>
<div class="t" style="left:226px;top:600px;font-size:12px;line-height:12px;color:#000;width:94px;text-align:center;"><span style="display:inline-block;transform:scaleX(0.885);transform-origin:50% 0">IP-Verbindung 3</span></div>
<div class="t" style="left:226px;top:618px;font-size:12px;line-height:12px;color:#000;width:94px;text-align:center;"><span style="display:inline-block;transform:scaleX(0.885);transform-origin:50% 0">IP-Verbindung 4</span></div>
<div class="t" style="left:320px;top:564px;font-size:12px;line-height:12px;color:#000;width:39px;text-align:center;"><span style="display:inline-block;transform:scaleX(0.885);transform-origin:50% 0">Ja</span></div>
<div class="t" style="left:320px;top:582px;font-size:12px;line-height:12px;color:#000;width:39px;text-align:center;"><span style="display:inline-block;transform:scaleX(0.885);transform-origin:50% 0">---</span></div>
<div class="t" style="left:320px;top:600px;font-size:12px;line-height:12px;color:#000;width:39px;text-align:center;"><span style="display:inline-block;transform:scaleX(0.885);transform-origin:50% 0">---</span></div>
<div class="t" style="left:320px;top:618px;font-size:12px;line-height:12px;color:#000;width:39px;text-align:center;"><span style="display:inline-block;transform:scaleX(0.885);transform-origin:50% 0">---</span></div>
<div class="t" style="left:361px;top:564px;font-size:12px;line-height:12px;color:#000;white-space:pre;"><span style="display:inline-block;transform:scaleX(0.885);transform-origin:0 0">1: Stehend (ETH-IP (VdS 2465-S2): 1.2.3.4, Port: 12345)</span></div>
<div class="t" style="left:638px;top:564px;font-size:12px;line-height:12px;color:#000;white-space:pre;"><span style="display:inline-block;transform:scaleX(0.885);transform-origin:0 0">IP-Verb. 1 aufgebaut</span></div>
<div class="t" style="left:743px;top:564px;font-size:12px;line-height:12px;color:#000;width:66px;text-align:center;"><span style="display:inline-block;transform:scaleX(0.885);transform-origin:50% 0">0 min</span></div>
<div class="t" style="left:809px;top:564px;font-size:12px;line-height:12px;color:#000;width:66px;text-align:center;"><span style="display:inline-block;transform:scaleX(0.885);transform-origin:50% 0">20 sec.</span></div>
<div class="t" style="left:879px;top:564px;font-size:12px;line-height:12px;color:#000;white-space:pre;"><span style="display:inline-block;transform:scaleX(0.885);transform-origin:0 0">mit  Satztyp 0x02</span></div>
<div class="t" style="left:964px;top:564px;font-size:12px;line-height:12px;color:#000;width:113px;text-align:center;"><span style="display:inline-block;transform:scaleX(0.885);transform-origin:50% 0">10 s</span></div>
<div style="left:2px;top:808px;width:1423px;height:19px;background:#f0f0f0;"></div>
<div style="left:105px;top:810px;width:1px;height:16px;background:#d8d8d8;"></div>
<div style="left:434px;top:810px;width:1px;height:16px;background:#d8d8d8;"></div>
<div style="left:513px;top:810px;width:1px;height:16px;background:#d8d8d8;"></div>
<div style="left:564px;top:810px;width:1px;height:16px;background:#d8d8d8;"></div>
<div style="left:668px;top:810px;width:1px;height:16px;background:#d8d8d8;"></div>
<div style="left:735px;top:810px;width:1px;height:16px;background:#d8d8d8;"></div>
<div style="left:747px;top:810px;width:1px;height:16px;background:#d8d8d8;"></div>
<div class="t" style="left:4px;top:813px;font-size:12px;line-height:12px;color:#000;letter-spacing:-0.15px;">Firmware: 24.xx</div>
<div class="t" style="left:145px;top:813px;font-size:12px;line-height:12px;color:#000;letter-spacing:-0.15px;">Datei: C:\Users\Thomas\Downloads\Untitled.cxl</div>
<div class="t" style="left:449px;top:813px;font-size:12px;line-height:12px;color:#000;letter-spacing:-0.15px;">26.02.2020</div>
<div class="t" style="left:527px;top:813px;font-size:12px;line-height:12px;color:#000;letter-spacing:-0.15px;">20:49</div>
<div class="t" style="left:577px;top:813px;font-size:12px;line-height:12px;color:#000;letter-spacing:-0.15px;">Daten geändert</div>
<div class="t" style="left:680px;top:813px;font-size:12px;line-height:12px;color:#000;letter-spacing:-0.15px;">Kopien: 0</div>
<div class="t" style="left:741px;top:813px;font-size:12px;line-height:12px;color:#000;letter-spacing:-0.15px;">-</div>
<div class="t" style="left:751px;top:813px;font-size:12px;line-height:12px;color:#000;letter-spacing:-0.15px;">Rückgängigstufe: 19</div>
<div style="left:1421px;top:817px;width:2px;height:2px;background:#b0b0b0;"></div>
<div style="left:1421px;top:820px;width:2px;height:2px;background:#b0b0b0;"></div>
<div style="left:1418px;top:820px;width:2px;height:2px;background:#b0b0b0;"></div>
<div style="left:1421px;top:823px;width:2px;height:2px;background:#b0b0b0;"></div>
<div style="left:1418px;top:823px;width:2px;height:2px;background:#b0b0b0;"></div>
<div style="left:1415px;top:823px;width:2px;height:2px;background:#b0b0b0;"></div></body></html>
